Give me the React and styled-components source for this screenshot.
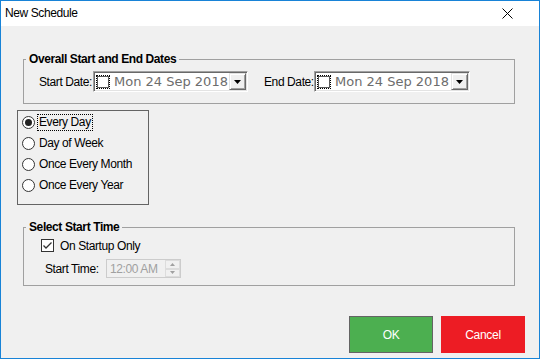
import React from 'react'
import styled, { createGlobalStyle } from 'styled-components'

const GlobalStyle = createGlobalStyle`
    html, body {
        margin: 0;
        padding: 0;
    }
    body {
        font-family: "Liberation Sans", Arial, sans-serif;
        font-size: 12px;
        letter-spacing: -0.4px;
        color: #000;
    }
`

const Window = styled.div`
    width: 540px;
    height: 359px;
    box-sizing: border-box;
    border: 1px solid #1883d7;
    display: flex;
    flex-direction: column;
    background: #f0f0f0;
`

const TitleBar = styled.div`
    flex-shrink: 0;
    height: 25px;
    background: #fff;
    display: flex;
    align-items: center;
    justify-content: space-between;
    padding: 0 26px 0 4px;
`

const Title = styled.span`
    line-height: 25px;
`

const Body = styled.div`
    flex: 1;
    display: flex;
    flex-direction: column;
    align-items: flex-start;
    padding: 26px 14px 5px 16px;
`

const Group = styled.fieldset`
    align-self: stretch;
    margin: ${props => props.top || 0}px 10px 0 6px;
    padding: 0;
    min-width: 0;
    border: 1px solid #a0a0a0;
`

const Legend = styled.legend`
    margin-left: 2px;
    padding: 0 3px;
    font-weight: bold;
    line-height: 14px;
`

const DateRow = styled.div`
    display: flex;
    align-items: center;
    padding: 5px 0 11px 15px;
`

const Label = styled.span`
    width: ${props => props.w}px;
    margin-left: ${props => props.ml || 0}px;
    flex-shrink: 0;
    line-height: 14px;
    white-space: nowrap;
`

const Picker = styled.div`
    width: ${props => props.w}px;
    height: 21px;
    flex-shrink: 0;
    box-sizing: border-box;
    overflow: hidden;
    background: #fff;
    border: 1px solid;
    border-color: #a0a0a0 #fff #fff #a0a0a0;
    box-shadow: inset 1px 1px 0 #696969, inset -1px -1px 0 #e3e3e3;
    display: flex;
    align-items: center;
    padding: 0 1px 0 2px;
`

const CheckFocus = styled.div`
    width: 14px;
    height: 14px;
    flex-shrink: 0;
    box-sizing: border-box;
    border: 1px dotted #000;
    display: flex;
    align-items: center;
    justify-content: center;
`

const SmallBox = styled.div`
    width: 12px;
    height: 12px;
    box-sizing: border-box;
    border: 1px solid #5a5a5a;
    background: #fff;
`

const DateText = styled.span`
    margin-left: 4px;
    min-width: 0;
    font-family: "DejaVu Sans", Verdana, sans-serif;
    font-size: 13px;
    letter-spacing: 0;
    color: #6d6d6d;
    line-height: 17px;
    white-space: nowrap;
`

const DropButton = styled.div`
    margin-left: auto;
    width: 17px;
    height: 17px;
    flex-shrink: 0;
    box-sizing: border-box;
    background: #f0f0f0;
    border: 1px solid;
    border-color: #e3e3e3 #696969 #696969 #e3e3e3;
    box-shadow: inset 1px 1px 0 #fff, inset -1px -1px 0 #a0a0a0;
    display: flex;
    align-items: center;
    justify-content: center;
`

const RadioBox = styled.div`
    margin-top: 6px;
    width: 132px;
    height: 95px;
    box-sizing: border-box;
    border: 1px solid #646464;
    padding: 1px 0 8px 4px;
`

const RadioRow = styled.div`
    height: 21px;
    display: flex;
    align-items: center;
    gap: 3px;
`

const RadioCircle = styled.div`
    width: 13px;
    height: 13px;
    box-sizing: border-box;
    border: 1px solid #333;
    border-radius: 50%;
    background: #fff;
    display: flex;
    align-items: center;
    justify-content: center;

    &::after {
        content: '';
        display: ${props => props.checked ? 'block' : 'none'};
        width: 7px;
        height: 7px;
        border-radius: 50%;
        background: #222;
    }
`

const RadioText = styled.span`
    line-height: 15px;
    padding: 0 1px;
    outline: ${props => props.focus ? '1px dotted #000' : 'none'};
`

const CheckRow = styled.div`
    display: flex;
    align-items: center;
    gap: 6px;
    padding: 5px 0 0 17px;
    height: 13px;
`

const TimeRow = styled.div`
    display: flex;
    align-items: center;
    margin-top: 7px;
    padding: 0 0 7px 21px;
`

const TimeBox = styled.div`
    width: 75px;
    height: 19px;
    box-sizing: border-box;
    border: 1px solid #cccccc;
    background: #f0f0f0;
    display: flex;
    align-items: center;
    padding: 0 0 0 3px;
    color: #a0a0a0;
`

const Spin = styled.div`
    margin-left: auto;
    width: 15px;
    height: 17px;
    display: flex;
    flex-direction: column;
`

const SpinButton = styled.div`
    flex: 1;
    box-sizing: border-box;
    border: 1px solid #dcdcdc;
    background: #f0f0f0;
    display: flex;
    align-items: center;
    justify-content: center;
`

const ButtonRow = styled.div`
    margin-top: auto;
    align-self: stretch;
    display: flex;
    justify-content: flex-end;
    gap: 8px;
`

const Button = styled.button`
    width: 84px;
    height: 37px;
    box-sizing: border-box;
    border: 1px solid ${props => props.ok ? '#646464' : '#ed1c24'};
    background: ${props => props.ok ? '#4caf50' : '#ed1c24'};
    color: #fff;
    font-family: "Liberation Sans", Arial, sans-serif;
    font-size: 12px;
    letter-spacing: -0.3px;
    padding: 0;
`

const Arrow = ({ up, color = '#000', w = 7, h = 4 }) => (
    <svg width={w} height={h} viewBox={`0 0 ${w} ${h}`}>
        <polygon
            points={up ? `0,${h} ${w},${h} ${w / 2},0` : `0,0 ${w},0 ${w / 2},${h}`}
            fill={color}
        />
    </svg>
)

const DatePicker = ({ width }) => (
    <Picker w={width}>
        <CheckFocus><SmallBox /></CheckFocus>
        <DateText>Mon 24 Sep 2018</DateText>
        <DropButton><Arrow /></DropButton>
    </Picker>
)

const options = ['Every Day', 'Day of Week', 'Once Every Month', 'Once Every Year']

export default function App() {
    return <>
        <GlobalStyle />
        <Window>
            <TitleBar>
                <Title>New Schedule</Title>
                <svg width="11" height="11" viewBox="0 0 11 11">
                    <path d="M0.5 0.5 L10.5 10.5 M10.5 0.5 L0.5 10.5" stroke="#000" strokeWidth="1" />
                </svg>
            </TitleBar>
            <Body>
                <Group>
                    <Legend>Overall Start and End Dates</Legend>
                    <DateRow>
                        <Label w={54}>Start Date:</Label>
                        <DatePicker width={155} />
                        <Label w={50} ml={16}>End Date:</Label>
                        <DatePicker width={156} />
                    </DateRow>
                </Group>

                <RadioBox>
                    {options.map((o, i) =>
                        <RadioRow key={o}>
                            <RadioCircle checked={i === 0} />
                            <RadioText focus={i === 0}>{o}</RadioText>
                        </RadioRow>
                    )}
                </RadioBox>

                <Group top={15}>
                    <Legend>Select Start Time</Legend>
                    <CheckRow>
                        <svg width="13" height="13" viewBox="0 0 13 13">
                            <rect x="0.5" y="0.5" width="12" height="12" fill="#fff" stroke="#333" />
                            <path d="M2.5 6.5 L5 9 L10.5 3.5" fill="none" stroke="#333" strokeWidth="1.3" />
                        </svg>
                        <span>On Startup Only</span>
                    </CheckRow>
                    <TimeRow>
                        <Label w={61}>Start Time:</Label>
                        <TimeBox>
                            12:00 AM
                            <Spin>
                                <SpinButton><Arrow up color="#a0a0a0" w={5} h={3} /></SpinButton>
                                <SpinButton><Arrow color="#a0a0a0" w={5} h={3} /></SpinButton>
                            </Spin>
                        </TimeBox>
                    </TimeRow>
                </Group>

                <ButtonRow>
                    <Button ok>OK</Button>
                    <Button>Cancel</Button>
                </ButtonRow>
            </Body>
        </Window>
    </>
}
